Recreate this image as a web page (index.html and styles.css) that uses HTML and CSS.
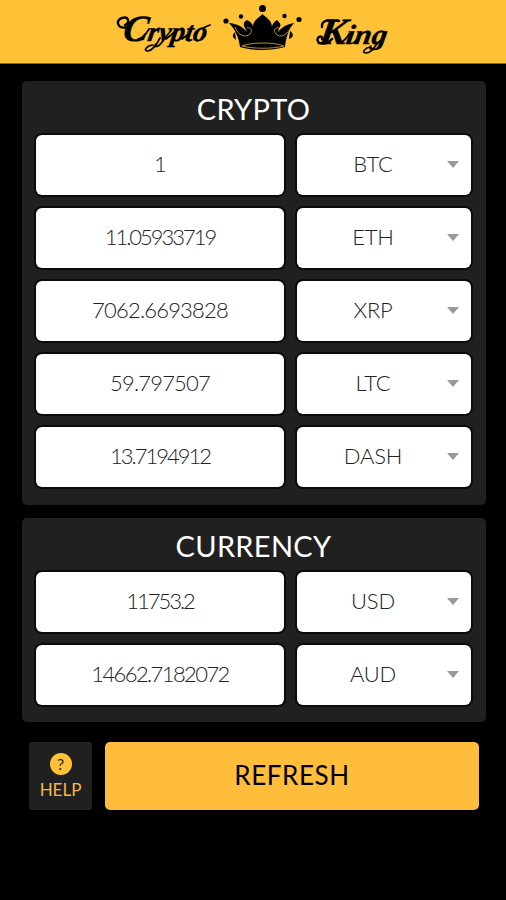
FILE: index.html
```html
<!DOCTYPE html>
<html lang="en">
<head>
<meta charset="utf-8">
<title>Crypto King</title>
<link rel="stylesheet" href="styles.css">
</head>
<body>
<header class="header">
<svg class="logo" viewBox="0 0 280 63" role="img" aria-label="Crypto King">
<g class="script">
<text transform="translate(9 41) skewX(-9)" textLength="84" lengthAdjust="spacingAndGlyphs"><tspan class="initial">C</tspan>rypto</text>
<text transform="translate(205 44) skewX(-9)" textLength="68" lengthAdjust="spacingAndGlyphs"><tspan class="initial">K</tspan>ing</text>
</g>
<path class="swash" d="M15 27C4 30 2 20 9 18c7-2 8 5 3 7M219 39c-7 8-17 4-14-1 2-3 5-1 4 1M209 27c-1-8 9-7 17-6"/>
<path class="link" d="M25 39q6-1 11-10M40 45c-5 0-11 6-5 6 6-1 10-9 12-13M53 39q6-4 9-8M69 39q6-4 9-8M90 28l7-3M227 43q6-3 9-9M240 43q4-2 7-8M257 47c-5 1-9 6-4 6 8 0 9-11 17-14"/>
<g>
<circle cx="149.500" cy="8.500" r="3.500"/><circle cx="128" cy="16.500" r="2.200"/><circle cx="171.500" cy="16" r="2.200"/><circle cx="113" cy="21" r="2.600"/><circle cx="186" cy="19.500" r="2.600"/>
<path d="M117 23c8 1 13 4 17 9l-3-6c-1-3 1-5 3-6 4 2 6 4 6 7 0-7 6-9 9.500-13 4 4 9 6 9.500 13 0-3 2-5 5-7 3 3 5 5 2 8l-1 4c4-5 9-8 16-9-5 6-8 13-9 24-14 4-32 4-45 0-1-9-5-18-11-24Z"/>
<path d="M122 32c-3 3-3 5 1 8zM177 31c4 3 4 6-1 8z"/>
<path class="trim" d="M122 27c3 9 11 11 15 7 3-4 1-7-3-6M178 27c-4 9-11 11-15 7-3-4-1-7 3-6M129 46c9-4 33-4 42 0-12 3-30 3-42 0"/>
</g>
</svg>
</header>
<main>
<section class="panel crypto">
<h1>CRYPTO</h1>
<div class="row"><div class="field">1</div><div class="field select">BTC</div></div>
<div class="row"><div class="field tighter">11.05933719</div><div class="field select">ETH</div></div>
<div class="row"><div class="field">7062.6693828</div><div class="field select">XRP</div></div>
<div class="row"><div class="field">59.797507</div><div class="field select">LTC</div></div>
<div class="row"><div class="field tighter">13.7194912</div><div class="field select">DASH</div></div>
</section>
<section class="panel currency">
<h1>CURRENCY</h1>
<div class="row"><div class="field tighter">11753.2</div><div class="field select">USD</div></div>
<div class="row"><div class="field tight">14662.7182072</div><div class="field select">AUD</div></div>
</section>
<div class="actions">
<button class="help"><span class="question">?</span><span>HELP</span></button>
<button class="refresh">REFRESH</button>
</div>
</main>
</body>
</html>
```
FILE: styles.css
```css
* { box-sizing: border-box; }
body { margin: 0; min-height: 900px; background: #000; font-family: Lato, "Liberation Sans", sans-serif; }
.header { height: 64px; background: #ffc237; border-bottom: 1px solid #8b6818; display: flex; justify-content: center; }
.logo { width: 280px; height: 63px; }
.script { font: italic bold 28px "Liberation Serif", serif; stroke: #000; stroke-width: .4px; }
.initial { font-size: 37px; }
.swash { fill: none; stroke: #000; stroke-width: 2.4; stroke-linecap: round; }
.link { fill: none; stroke: #000; stroke-width: 1.7; stroke-linecap: round; }
.trim { fill: none; stroke: #b58b35; stroke-width: 1; }
main { padding: 17px 20px 0 22px; }
.panel { background: #202020; border-radius: 5px; padding: 10px 15px 0 14px; }
.crypto { height: 424px; }
.currency { height: 204px; margin-top: 13px; }
h1 { margin: 0 0 9px; height: 35px; line-height: 35px; text-align: center; color: #fff; font-weight: 400; font-size: 29px; letter-spacing: .3px; }
.row { display: grid; grid-template-columns: 248px 174px; gap: 13px; height: 60px; margin-bottom: 13px; }
.field { background: #fff; border-radius: 6px; box-shadow: 0 0 0 2px #0b0b0b; color: #222; display: flex; align-items: center; justify-content: center; font-size: 22px; font-weight: 300; letter-spacing: -.8px; padding-bottom: 4px; }
.tight { letter-spacing: -1.6px; }
.tighter { letter-spacing: -2px; }
.select { position: relative; padding-right: 22px; letter-spacing: -.2px; }
.select::after { content: ""; position: absolute; right: 12px; top: 26px; border: 6px solid transparent; border-top: 7px solid #999; border-bottom: 0; }
.actions { display: flex; gap: 13px; padding: 20px 7px 0; }
button { border: 0; height: 68px; font-family: inherit; padding: 0; }
.help { width: 63px; background: #202020; color: #f5b944; border-radius: 3px; display: flex; flex-direction: column; align-items: center; font-size: 17px; line-height: 22px; padding-top: 11px; gap: 4px; }
.question { width: 22px; height: 22px; border-radius: 50%; background: #ffc237; color: #202020; font-size: 16px; line-height: 22px; }
.refresh { flex: 1; border-radius: 5px; background: #ffbd3b; color: #000; font-size: 26px; letter-spacing: .6px; padding-bottom: 2px; }
```
